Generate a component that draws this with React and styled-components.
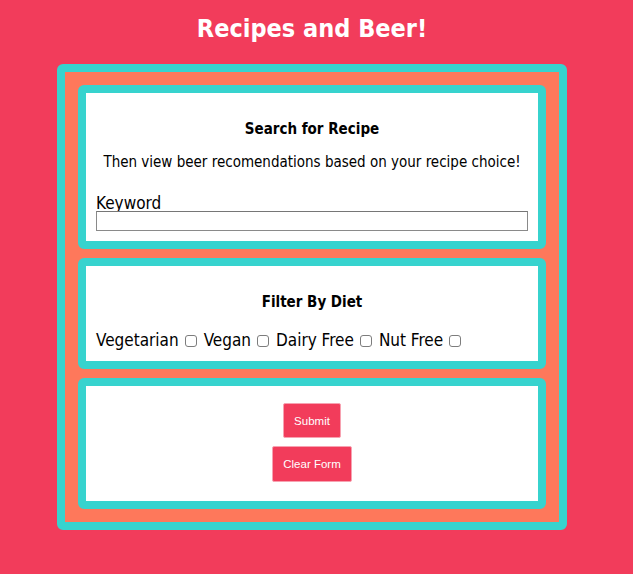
import React from 'react'
import styled, { createGlobalStyle } from 'styled-components'

const GlobalStyle = createGlobalStyle`
  html, body {
    margin: 0;
    padding: 0;
    background: #f23c5b;
    font-family: "DejaVu Sans Condensed", "DejaVu Sans", Tahoma, sans-serif;
    font-stretch: condensed;
  }
`

const Page = styled.div`
  width: 624px;
  min-height: 574px;
  background: #f23c5b;
  padding-top: 12px;
  box-sizing: border-box;
`

const Title = styled.h1`
  margin: 0 0 18px;
  text-align: center;
  color: #fff;
  font-size: 25px;
  line-height: 34px;
  font-weight: bold;
`

const Frame = styled.form`
  width: 510px;
  margin: 0 auto;
  box-sizing: border-box;
  border: 8px solid #37d3ce;
  border-radius: 6px;
  background: #fe785b;
  padding: 13px;
  display: flex;
  flex-direction: column;
  gap: 9px;
`

const Card = styled.div`
  border: 8px solid #37d3ce;
  border-radius: 6px;
  background: #fff;
  padding: 10px;
  height: ${props => props.h}px;
  box-sizing: border-box;
  display: flex;
  flex-direction: column;
  align-items: ${props => (props.center ? 'center' : 'stretch')};
`

const Heading = styled.h4`
  margin: 17px 0 0;
  text-align: center;
  font-size: 15px;
  line-height: 18px;
  font-weight: bold;
  color: #000;
`

const Note = styled.p`
  margin: 15px 0 0;
  text-align: center;
  font-size: 15px;
  line-height: 18px;
  color: #000;
`

const Label = styled.label`
  display: block;
  margin-top: 24px;
  font-size: 17px;
  line-height: 16px;
  color: #000;
`

const Input = styled.input`
  display: block;
  width: 100%;
  height: 20px;
  box-sizing: border-box;
  margin: 0;
  border: 1px solid #8a8a8a;
  border-top-color: #767676;
  padding: 0 2px;
`

const Options = styled.div`
  margin-top: 19px;
  display: flex;
  align-items: center;
  font-size: 17px;
  line-height: 20px;
  color: #000;
`

const Option = styled.label`
  display: flex;
  align-items: center;
`

const Box = styled.input`
  width: 12px;
  height: 12px;
  margin: 1px 7px 0 6px;
  appearance: none;
  border: 1px solid #7d7d7d;
  border-radius: 3px;
  background: #fff;
`

const Button = styled.button`
  font-family: "Liberation Sans", Arial, sans-serif;
  font-stretch: normal;
  font-size: 11.5px;
  color: #fff;
  background: #f23c5b;
  border: 1px solid #f7a2b1;
  border-radius: 2px;
  height: ${props => props.h}px;
  padding: 0 ${props => props.px}px;
  margin-top: ${props => props.mt}px;
`

const diets = ['Vegetarian', 'Vegan', 'Dairy Free', 'Nut Free']

export default function App() {
  return (
    <Page>
      <GlobalStyle />
      <Title>Recipes and Beer!</Title>
      <Frame onSubmit={e => e.preventDefault()}>
        <Card h={164}>
          <Heading>Search for Recipe</Heading>
          <Note>Then view beer recomendations based on your recipe choice!</Note>
          <Label htmlFor="kw">Keyword</Label>
          <Input id="kw" type="text" />
        </Card>
        <Card h={111}>
          <Heading>Filter By Diet</Heading>
          <Options>
            {diets.map(d => (
              <Option key={d}>
                {d}
                <Box type="checkbox" />
              </Option>
            ))}
          </Options>
        </Card>
        <Card h={131} center>
          <Button h={35} px={10} mt={7}>Submit</Button>
          <Button h={36} px={10} mt={8}>Clear Form</Button>
        </Card>
      </Frame>
    </Page>
  )
}
